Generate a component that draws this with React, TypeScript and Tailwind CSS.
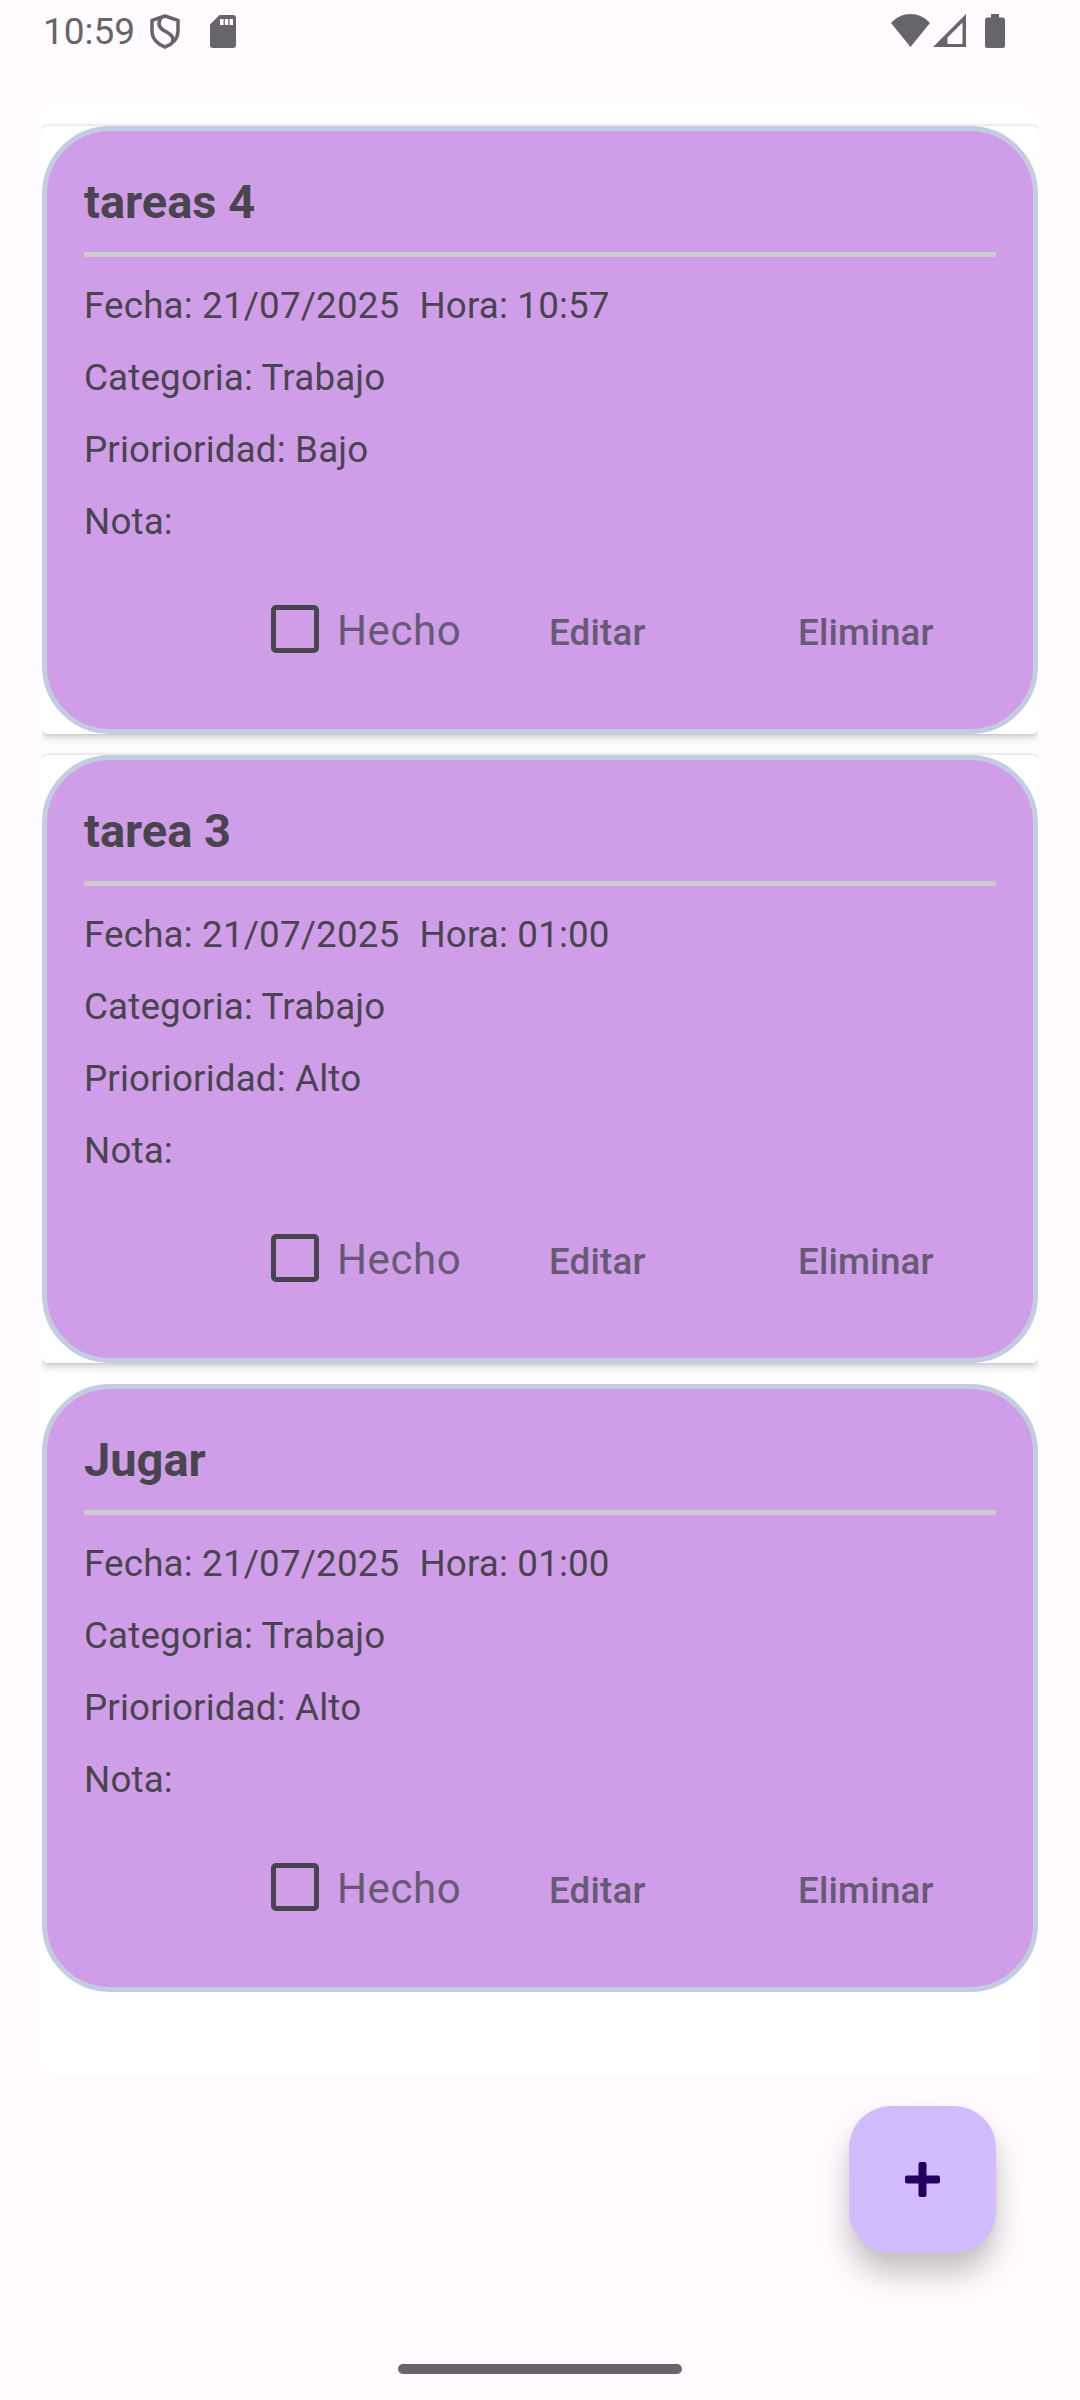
type Task = { title: string; date: string; time: string; category: string; priority: string; note: string };

const tasks: Task[] = [
  { title: 'tareas 4', date: '21/07/2025', time: '10:57', category: 'Trabajo', priority: 'Bajo', note: '' },
  { title: 'tarea 3', date: '21/07/2025', time: '01:00', category: 'Trabajo', priority: 'Alto', note: '' },
  { title: 'Jugar', date: '21/07/2025', time: '01:00', category: 'Trabajo', priority: 'Alto', note: '' },
];

function StatusBar() {
  return (
    <header className="flex h-[105px] items-start pl-[43px] pr-[75px] pt-[14px] text-[#67646a]">
      <span className="mt-[-4px] w-[107px] whitespace-nowrap text-[37px] leading-[43px]">10:59</span>
      <svg className="h-[35px] w-[30px]" viewBox="0 0 30 35" fill="none" stroke="currentColor" strokeWidth="3.5" strokeLinejoin="round">
        <path d="M15 2 28 6.3V17C28 24.5 22.5 30.5 15 33 7.500 30.5 2 24.500 2 17V6.300Z" />
        <path d="M11.500 3C8 8 8.500 12.500 12.500 15.500 17 19 25 21 22.500 28" />
      </svg>
      <svg className="ml-[30px] mt-px h-[33px] w-[26px]" viewBox="0 0 26 33" fill="currentColor">
        <path fillRule="evenodd" d="M9.500 0H23a3 3 0 0 1 3 3V30a3 3 0 0 1-3 3H3a3 3 0 0 1-3-3V9.500ZM10 4v6h3.600V4Zm4.800 0v6h3.400V4Zm4.700 0v6h3.500V4Z" />
      </svg>
      <svg className="ml-auto h-[33px] w-[39px]" viewBox="0 0 39 33" fill="currentColor">
        <path d="M0 9C11-3 28-3 39 9L19.500 33Z" />
      </svg>
      <svg className="ml-[3px] h-[33px] w-[33px]" viewBox="0 0 33 33" fill="currentColor">
        <path fillRule="evenodd" d="M33 0V33H0ZM29.500 8.500 14.500 23.500V30H29.500Z" />
      </svg>
      <svg className="ml-[19px] h-[34px] w-[20px]" viewBox="0 0 20 34" fill="currentColor">
        <path d="M6 0h8v3.500h3.500A2.500 2.500 0 0 1 20 6V31.500A2.500 2.500 0 0 1 17.500 34h-15A2.500 2.500 0 0 1 0 31.500V6A2.500 2.500 0 0 1 2.500 3.500H6Z" />
      </svg>
    </header>
  );
}

function TaskCard({ task }: { task: Task }) {
  return (
    <li className="h-[608px] rounded-[5px] bg-white shadow-[0_3px_10px_rgba(0,0,0,0.22),0_0_3px_rgba(0,0,0,0.12)] last:shadow-none">
      <article className="h-full rounded-[68px] border-[5px] border-[#c3cce0] bg-[#d09ee8] px-[37px] pt-[39px] text-[#49454f]">
        <h2 className="text-[47px] font-bold leading-[63px]">{task.title}</h2>
        <hr className="mt-[19px] h-[5px] border-0 bg-[#cccccc]" />
        <div className="mt-[13px] text-[36.75px] leading-[72px] tracking-[0.17px]">
          <div className="flex gap-[20px]">
            <p>Fecha: {task.date}</p>
            <p>Hora: {task.time}</p>
          </div>
          <p>Categoria: {task.category}</p>
          <p>Priorioridad: {task.priority}</p>
          <p>Nota: {task.note}</p>
        </div>
        <div className="mt-[37px] flex h-[72px] items-center pl-[187px] leading-[72px] text-[#665a75]">
          <label className="flex w-[278px] items-center">
            <span className="mb-[4px] h-[48px] w-[48px] rounded-[5px] border-[5px] border-[#49454f]" />
            <span className="ml-[18px] text-[42px] tracking-[0.6px]">Hecho</span>
          </label>
          <button className="w-[249px] pt-[4px] text-left text-[36.75px] font-medium tracking-[0.2px]">Editar</button>
          <button className="pt-[4px] text-left text-[36.75px] font-medium tracking-[0.2px]">Eliminar</button>
        </div>
      </article>
    </li>
  );
}

export default function App() {
  return (
    <div className="flex h-[2400px] w-[1080px] flex-col overflow-hidden bg-[#fffbff] font-['Roboto',sans-serif]">
      <StatusBar />
      <ul className="mx-[42px] flex h-[1971px] flex-col gap-[21px] overflow-hidden bg-white pt-[21px]">
        {tasks.map((task) => (
          <TaskCard key={task.title} task={task} />
        ))}
      </ul>
      <button className="ml-auto mr-[84px] mt-[30px] flex h-[147px] w-[147px] items-center justify-center rounded-[42px] bg-[#d0bcff] text-[#21005d] shadow-[0_21px_30px_rgba(0,0,0,0.23),0_2px_10px_rgba(0,0,0,0.03)]">
        <svg className="h-[35px] w-[35px]" viewBox="0 0 35 35" fill="currentColor">
          <rect x="13.500" y="0" width="8" height="35" rx="2" />
          <rect x="0" y="13.500" width="35" height="8" rx="2" />
        </svg>
      </button>
      <div className="mx-auto mb-[26px] mt-auto h-[10px] w-[284px] rounded-full bg-[#67646a]" />
    </div>
  );
}
